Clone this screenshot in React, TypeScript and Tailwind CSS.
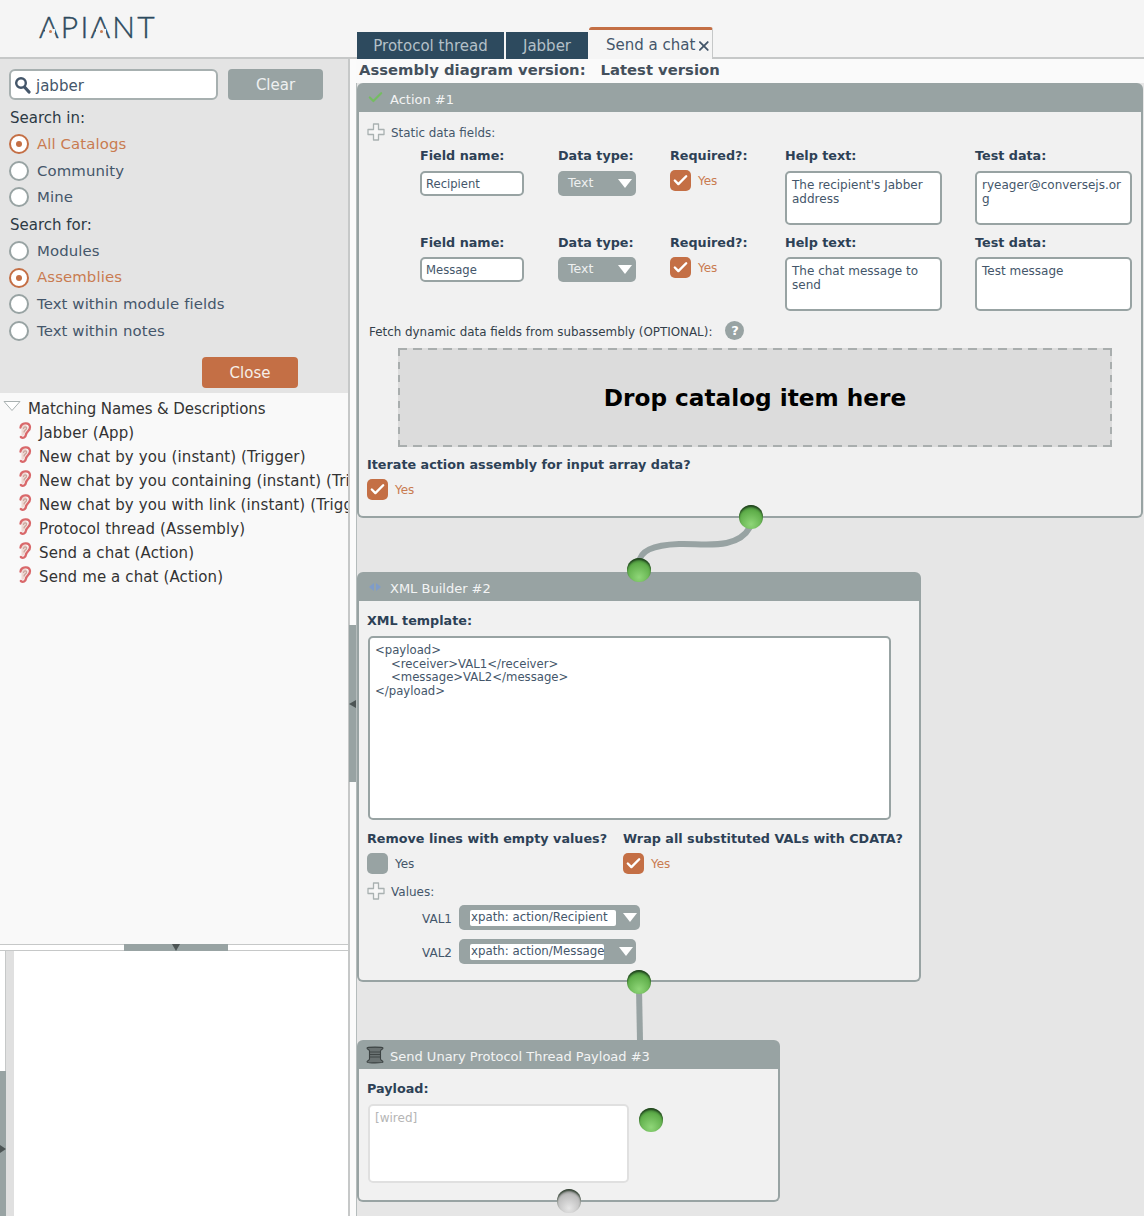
import React from 'react';
import { Check, X } from 'lucide-react';

const Radio = ({ label, on }: { label: string; on?: boolean }) => (
  <div className="flex items-center h-[26.6px] pl-[9px]">
    <span className={`w-[20px] h-[20px] rounded-full border-2 bg-white flex items-center justify-center shrink-0 ${on ? 'border-[#c46f45]' : 'border-[#98a3a3]'}`}>
      {on && <span className="w-[6px] h-[6px] rounded-full bg-[#c46f45]" />}
    </span>
    <span className={`ml-[8px] text-[14.9px] tracking-[0.1px] ${on ? 'text-[#c97b50]' : 'text-[#44566a]'}`}>{label}</span>
  </div>
);

const Ear = () => (
  <svg width="14" height="20" viewBox="0 0 14 20" className="shrink-0">
    <path d="M3.5 8 C3 3 7 3 9 5 C11 7 8 10 7 12 C6.5 14 5 15 3.5 14.5 Z" fill="#efd8d2" />
    <path d="M2.5 6.5 C3 1.5 11.5 0.5 12 6 C12.3 9.5 8.5 10.5 8 13.5 C7.6 16.5 5 17.8 2.8 16" fill="none" stroke="#d9686a" strokeWidth="2.3" strokeLinecap="round" />
    <path d="M5.5 7.5 C6 5.5 8.6 5.5 8.6 7.2 C8.6 8.5 6.5 9 6 11" fill="none" stroke="#c9a59c" strokeWidth="1.2" strokeLinecap="round" />
  </svg>
);

const Tree = ({ label }: { label: string }) => (
  <div className="flex items-center h-[24px] pl-[18px] whitespace-nowrap">
    <span className="-mt-[5px]"><Ear /></span>
    <span className="ml-[7px] text-[15px] tracking-[0.12px] text-[#333]">{label}</span>
  </div>
);

const PlusOutline = () => (
  <svg width="18" height="18" viewBox="0 0 18 18" className="shrink-0">
    <path d="M6.5 1 H11.5 V6.5 H17 V11.5 H11.5 V17 H6.5 V11.5 H1 V6.5 H6.5 Z" fill="#f6f6f6" stroke="#a9b1b1" strokeWidth="1.3" strokeLinejoin="round" />
  </svg>
);

const CheckBox = ({ on = true }: { on?: boolean }) => (
  <span className={`w-[21px] h-[21px] rounded-[5px] flex items-center justify-center shrink-0 ${on ? 'bg-[#c46f45]' : 'bg-[#98a3a3]'}`}>
    {on && <Check size={17} strokeWidth={3.4} className="text-white" />}
  </span>
);

const YesRow = ({ on = true, className = '' }: { on?: boolean; className?: string }) => (
  <div className={`flex items-center ${className}`}>
    <CheckBox on={on} />
    <span className={`ml-[7px] text-[12px] ${on ? 'text-[#c97b50]' : 'text-[#44566a]'}`}>Yes</span>
  </div>
);

const Ball = ({ className, grey }: { className: string; grey?: boolean }) => (
  <span
    className={`absolute w-[24px] h-[24px] rounded-full shadow-[inset_0_2px_2px_rgba(20,40,20,0.75)] ${grey
      ? 'bg-[radial-gradient(circle_at_50%_80%,#e6e6e6,#bdbdbd_60%,#777)]'
      : 'bg-[radial-gradient(circle_at_50%_80%,#8fd678,#5fae4a_60%,#2f6f2c)]'} ${className}`}
  />
);

const Label = ({ children, className = '' }: { children: React.ReactNode; className?: string }) => (
  <div className={`text-[12.75px] font-bold text-[#2d4156] pt-[2px] leading-[14px] whitespace-nowrap ${className}`}>{children}</div>
);

const FieldRow = ({ name, help, test, tight }: { name: string; help: string; test: string; tight?: boolean }) => {
  const gap = tight ? 'mt-[7px]' : 'mt-[8px]';
  return (
    <div className="grid grid-cols-[138px_112px_115px_190px_157px] h-[87px]">
      <div>
        <Label>Field name:</Label>
        <div className={`${gap} w-[104px] h-[25px] bg-white border-2 border-[#98a3a3] rounded-[5px] pl-[4px] text-[11.6px] leading-[22px] text-[#44566a]`}>{name}</div>
      </div>
      <div>
        <Label>Data type:</Label>
        <div className={`${gap} w-[78px] h-[25px] bg-[#98a3a3] rounded-[5px] pl-[10px] pr-[4px] text-[12.5px] text-[#eef0f0] flex items-center justify-between`}>
          <span className="-mt-[1px]">Text</span>
          <span className="w-0 h-0 border-x-[7px] border-x-transparent border-t-[9px] border-t-white" />
        </div>
      </div>
      <div>
        <Label>Required?:</Label>
        <YesRow className="mt-[7px]" />
      </div>
      <div>
        <Label>Help text:</Label>
        <div className={`${gap} w-[157px] h-[54px] bg-white border-2 border-[#98a3a3] rounded-[5px] px-[5px] pt-[6px] text-[12px] leading-[13.5px] text-[#44566a]`}>{help}</div>
      </div>
      <div>
        <Label>Test data:</Label>
        <div className={`${gap} w-[157px] h-[54px] bg-white border-2 border-[#98a3a3] rounded-[5px] px-[5px] pt-[6px] text-[12px] leading-[13.5px] text-[#44566a] break-all`}>{test}</div>
      </div>
    </div>
  );
};

const CardHead = ({ icon, title }: { icon: React.ReactNode; title: string }) => (
  <div className="h-[29px] bg-[#98a3a3] rounded-t-[6px] flex items-center relative">
    <span className="w-[33px] flex justify-center pl-[3px]">{icon}</span>
    <span className="text-[13px] pt-[5px] text-[#f3f4f4] whitespace-nowrap">{title}</span>
  </div>
);

const ValueRow = ({ name, value, innerW, w }: { name: string; value: string; innerW: string; w: string }) => (
  <div className="flex items-center h-[25px]">
    <span className="w-[37px] ml-[55px] text-[12px] text-[#44566a] shrink-0 mt-[3px]">{name}</span>
    <div className={`h-[25px] bg-[#98a3a3] rounded-[5px] flex items-center justify-between pl-[11px] pr-[3px] ${w}`}>
      <span className={`h-[16px] bg-white rounded-[2px] text-[11.8px] leading-[15px] pl-[1px] text-[#44566a] whitespace-nowrap ${innerW}`}>{value}</span>
      <span className="w-0 h-0 border-x-[7.5px] border-x-transparent border-t-[9px] border-t-white" />
    </div>
  </div>
);

const Spool = () => (
  <svg width="18" height="18" viewBox="0 0 18 18">
    <path d="M1 2 C1 0.8 17 0.8 17 2 C17 3.5 14.5 3.5 14.5 5 V13 C14.5 14.5 17 14.5 17 16 C17 17.2 1 17.2 1 16 C1 14.5 3.5 14.5 3.5 13 V5 C3.5 3.5 1 3.5 1 2 Z" fill="#6a7272" stroke="#3c4343" strokeWidth="1.1" />
    <path d="M3.5 6 H14.5 M3.5 8.5 H14.5 M3.5 11 H14.5" stroke="#3c4343" strokeWidth="0.9" />
  </svg>
);

const dropZone = "bg-[repeating-linear-gradient(90deg,#a9aeae_0_9px,transparent_9px_15px),repeating-linear-gradient(90deg,#a9aeae_0_9px,transparent_9px_15px),repeating-linear-gradient(0deg,#a9aeae_0_7px,transparent_7px_13px),repeating-linear-gradient(0deg,#a9aeae_0_7px,transparent_7px_13px)] bg-[length:100%_2px,100%_2px,2px_100%,2px_100%] bg-[position:top,bottom,left,right] bg-no-repeat";

export default function App() {
  return (
    <div className="w-[1144px] h-[1216px] overflow-hidden flex flex-col bg-[#f5f5f5] font-['DejaVu_Sans',sans-serif] text-[#333]">
      {/* top bar with logo and tabs */}
      <div className="h-[59px] flex shrink-0">
        <div className="w-[357px] border-b-2 border-[#c6c8c8] pl-[39px] pt-[7px]">
          <span className="relative inline-block font-['Lato',sans-serif] font-light text-[30px] leading-[38px] tracking-[2.2px] text-[#2d4a5e] [-webkit-text-stroke:0.4px_#2d4a5e]">
            APIANT
            {/* the A's in the logo have a dot in place of the bar */}
            <span className="absolute left-[6px] top-[22px] w-[10px] h-[4px] bg-[#f5f5f5] flex items-center justify-center">
              <span className="w-[3px] h-[3px] rounded-full bg-[#c97b50]" />
            </span>
            <span className="absolute left-[57px] top-[22px] w-[10px] h-[4px] bg-[#f5f5f5] flex items-center justify-center">
              <span className="w-[3px] h-[3px] rounded-full bg-[#c97b50]" />
            </span>
          </span>
        </div>
        <div className="flex items-end">
          <div className="h-[27px] w-[147px] pt-[2px] bg-[#2d4a5e] text-[15px] text-[#b4c0c8] flex items-center justify-center">Protocol thread</div>
          <div className="h-[27px] w-[82px] pt-[2px] ml-[2px] bg-[#2d4a5e] text-[15px] text-[#b4c0c8] flex items-center justify-center">Jabber</div>
          <div className="h-[32px] w-[124px] ml-[1px] bg-[#f5f5f5] border-t-[3px] border-t-[#c46f45] border-r border-r-[#c6c8c8] rounded-t-[3px] text-[15px] pt-[2px] text-[#44566a] flex items-center pl-[17px] whitespace-nowrap">
            Send a chat
            <X size={16} strokeWidth={2.8} className="text-[#44566a] ml-[1px]" />
          </div>
        </div>
        <div className="flex-1 border-b-2 border-[#c6c8c8]" />
      </div>

      <div className="flex-1 flex min-h-0 relative">
        {/* left column */}
        <div className="w-[350px] shrink-0 border-r-2 border-[#c6c8c8] flex flex-col overflow-hidden">
          <div className="h-[334px] bg-[#e4e4e4] shrink-0 pt-[10px]">
            <div className="flex pl-[9px]">
              <div className="w-[209px] h-[31px] bg-white border-2 border-[#a7b0b0] rounded-[6px] flex items-center pl-[3px]">
                <svg width="17" height="18" viewBox="0 0 17 18" className="shrink-0">
                  <circle cx="7" cy="7" r="4.8" fill="none" stroke="#44566a" strokeWidth="2.4" />
                  <path d="M10.5 11 L15 16" stroke="#44566a" strokeWidth="3.2" strokeLinecap="round" />
                </svg>
                <span className="ml-[5px] pt-[3px] text-[15px] text-[#44566a]">jabber</span>
              </div>
              <div className="ml-[10px] w-[95px] h-[31px] pt-[2px] bg-[#98a3a3] rounded-[4px] text-[15px] text-[#eef0f0] flex items-center justify-center">Clear</div>
            </div>
            <div className="pl-[10px] h-[26px] mt-[5px] text-[15px] text-[#2c3a44] flex items-center">Search in:</div>
            <Radio label="All Catalogs" on />
            <Radio label="Community" />
            <Radio label="Mine" />
            <div className="pl-[10px] h-[27px] pt-[2px] text-[15px] text-[#2c3a44] flex items-center">Search for:</div>
            <Radio label="Modules" />
            <Radio label="Assemblies" on />
            <Radio label="Text within module fields" />
            <Radio label="Text within notes" />
            <div className="ml-[202px] mt-[13px] w-[96px] h-[31px] pt-[2px] bg-[#c46f45] rounded-[4px] text-[15px] text-[#f6efe9] flex items-center justify-center">Close</div>
          </div>

          <div className="flex-1 bg-[#f9f9f9] pt-[4px] min-h-0">
            <div className="flex items-center h-[24px] pl-[3px] whitespace-nowrap">
              <svg width="18" height="12" viewBox="0 0 18 12" className="shrink-0 -mt-[6px]">
                <path d="M1 1.5 H17 L9 10.5 Z" fill="#fff" stroke="#a9b1b1" strokeWidth="1" strokeLinejoin="round" />
              </svg>
              <span className="ml-[7px] text-[15px] tracking-[-0.1px] text-[#333]">Matching Names &amp; Descriptions</span>
            </div>
            <Tree label="Jabber (App)" />
            <Tree label="New chat by you (instant) (Trigger)" />
            <Tree label="New chat by you containing (instant) (Trigger)" />
            <Tree label="New chat by you with link (instant) (Trigger)" />
            <Tree label="Protocol thread (Assembly)" />
            <Tree label="Send a chat (Action)" />
            <Tree label="Send me a chat (Action)" />
          </div>

          {/* horizontal splitter */}
          <div className="h-[7px] bg-white border-y border-[#c6c8c8] shrink-0 relative">
            <div className="absolute left-[124px] top-[-1px] w-[104px] h-[7px] bg-[#98a3a3] flex justify-center">
              <span className="w-0 h-0 border-x-[4px] border-x-transparent border-t-[7px] border-t-[#4d5555]" />
            </div>
          </div>

          <div className="h-[265px] shrink-0 flex bg-white">
            <div className="w-[6px] border-r border-[#c6c8c8] relative shrink-0">
              <div className="absolute left-0 top-[120px] bottom-0 w-[6px] bg-[#98a3a3]" />
              <span className="absolute left-0 top-[194px] w-0 h-0 border-y-[4px] border-y-transparent border-l-[6px] border-l-[#4d5555]" />
            </div>
            <div className="w-[8px] bg-[#e0e0e0] shrink-0" />
            <div className="flex-1" />
          </div>
        </div>

        {/* vertical splitter */}
        <div className="w-[6px] bg-[#fbfbfb] shrink-0" />
        <div className="absolute left-[349px] top-[566px] w-[8px] h-[157px] bg-[#98a3a3] flex items-center">
          <span className="w-0 h-0 border-y-[4px] border-y-transparent border-r-[7px] border-r-[#4d5555]" />
        </div>

        {/* right column */}
        <div className="flex-1 flex flex-col min-w-0">
          <div className="h-[24px] bg-[#fafafa] shrink-0 flex items-center pl-[3px] pb-[2px] text-[14.8px] font-bold text-[#44505c] whitespace-nowrap">
            <span>Assembly diagram version:</span>
            <span className="ml-[15px]">Latest version</span>
          </div>

          <div className="flex-1 relative bg-[#e6e6e6] border-l border-[#b5bcbc]">
            {/* wires */}
            <svg width="787" height="1133" className="absolute left-0 top-0">
              <path d="M393 444 C 380 468 345 460 322 461 C 295 462 283 468 282 480" fill="none" stroke="#98a3a3" strokeWidth="6" />
              <path d="M282 905 L283 958" fill="none" stroke="#98a3a3" strokeWidth="6" />
            </svg>

            {/* Action #1 */}
            <div className="absolute left-0 top-0 w-[786px]">
              <CardHead icon={<Check size={17} strokeWidth={3} className="text-[#74bd60]" />} title="Action #1" />
              <div className="h-[406px] bg-[#f1f1f1] border-x-2 border-b-2 border-[#98a3a3] rounded-b-[6px] pl-[8px] pt-[11px] text-[#44566a]">
                <div className="flex items-center h-[18px]">
                  <PlusOutline />
                  <span className="ml-[6px] pt-[4px] text-[11.9px]">Static data fields:</span>
                </div>
                <div className="mt-[6px] ml-[53px]">
                  <FieldRow name="Recipient" help="The recipient's Jabber address" test="ryeager@conversejs.org" />
                  <FieldRow tight name="Message" help="The chat message to send" test="Test message" />
                </div>
                <div className="flex items-center h-[18px] mt-[1px] ml-[2px] text-[11.9px] text-[#333f4a]">
                  <span className="pt-[3px]">Fetch dynamic data fields from subassembly (OPTIONAL):</span>
                  <span className="ml-[13px] -mt-[1px] w-[19px] h-[19px] rounded-full bg-[#98a3a3] text-white text-[13px] font-bold flex items-center justify-center">?</span>
                </div>
                <div className={`ml-[31px] mt-[8px] w-[714px] h-[99px] bg-[#dcdcdc] flex items-center justify-center text-[23.2px] font-bold text-black whitespace-nowrap ${dropZone}`}>
                  <span className="pt-[1px]">Drop catalog item here</span>
                </div>
                <Label className="mt-[9px]">Iterate action assembly for input array data?</Label>
                <YesRow className="mt-[7px]" />
              </div>
            </div>

            {/* XML Builder #2 */}
            <div className="absolute left-0 top-[489px] w-[564px]">
              <CardHead
                icon={
                  <svg width="14" height="10" viewBox="0 0 14 10">
                    <path d="M6 1 L1 5 L6 9 Z M8 1 L13 5 L8 9 Z" fill="#7f9cc9" />
                  </svg>
                }
                title="XML Builder #2"
              />
              <div className="h-[381px] bg-[#f1f1f1] border-x-2 border-b-2 border-[#98a3a3] rounded-b-[6px] pl-[8px] pt-[11px]">
                <Label>XML template:</Label>
                <div className="mt-[8px] ml-[1px] w-[523px] h-[184px] bg-white border-2 border-[#98a3a3] rounded-[5px] pl-[5px] pt-[6px] text-[11.7px] leading-[13.6px] text-[#44566a]">
                  <div>{'<payload>'}</div>
                  <div className="pl-[16px]">{'<receiver>VAL1</receiver>'}</div>
                  <div className="pl-[16px]">{'<message>VAL2</message>'}</div>
                  <div>{'</payload>'}</div>
                </div>
                <div className="flex mt-[10px]">
                  <div className="w-[256px]">
                    <Label>Remove lines with empty values?</Label>
                    <YesRow on={false} className="mt-[7px]" />
                  </div>
                  <div>
                    <Label>Wrap all substituted VALs with CDATA?</Label>
                    <YesRow className="mt-[7px]" />
                  </div>
                </div>
                <div className="flex items-center h-[18px] mt-[8px]">
                  <PlusOutline />
                  <span className="ml-[6px] pt-[2px] text-[12px] text-[#44566a]">Values:</span>
                </div>
                <div className="mt-[5px] flex flex-col gap-[9px]">
                  <ValueRow name="VAL1" value="xpath: action/Recipient" innerW="w-[146px]" w="w-[181px]" />
                  <ValueRow name="VAL2" value="xpath: action/Message" innerW="w-[134px]" w="w-[177px]" />
                </div>
              </div>
            </div>

            {/* Send Unary Protocol Thread Payload #3 */}
            <div className="absolute left-0 top-[957px] w-[423px]">
              <CardHead icon={<Spool />} title="Send Unary Protocol Thread Payload #3" />
              <div className="h-[133px] bg-[#f1f1f1] border-x-2 border-b-2 border-[#98a3a3] rounded-b-[6px] pl-[8px] pt-[11px]">
                <Label>Payload:</Label>
                <div className="mt-[8px] ml-[1px] w-[261px] h-[79px] bg-white border-2 border-[#e0e0e0] rounded-[5px] pl-[5px] pt-[5px] text-[12px] leading-[14px] text-[#b5b5b5]">[wired]</div>
              </div>
            </div>

            <Ball className="left-[382px] top-[422px]" />
            <Ball className="left-[270px] top-[475px]" />
            <Ball className="left-[270px] top-[887px]" />
            <Ball className="left-[282px] top-[1025px]" />
            <Ball grey className="left-[200px] top-[1106px]" />
          </div>
        </div>
      </div>
    </div>
  );
}
